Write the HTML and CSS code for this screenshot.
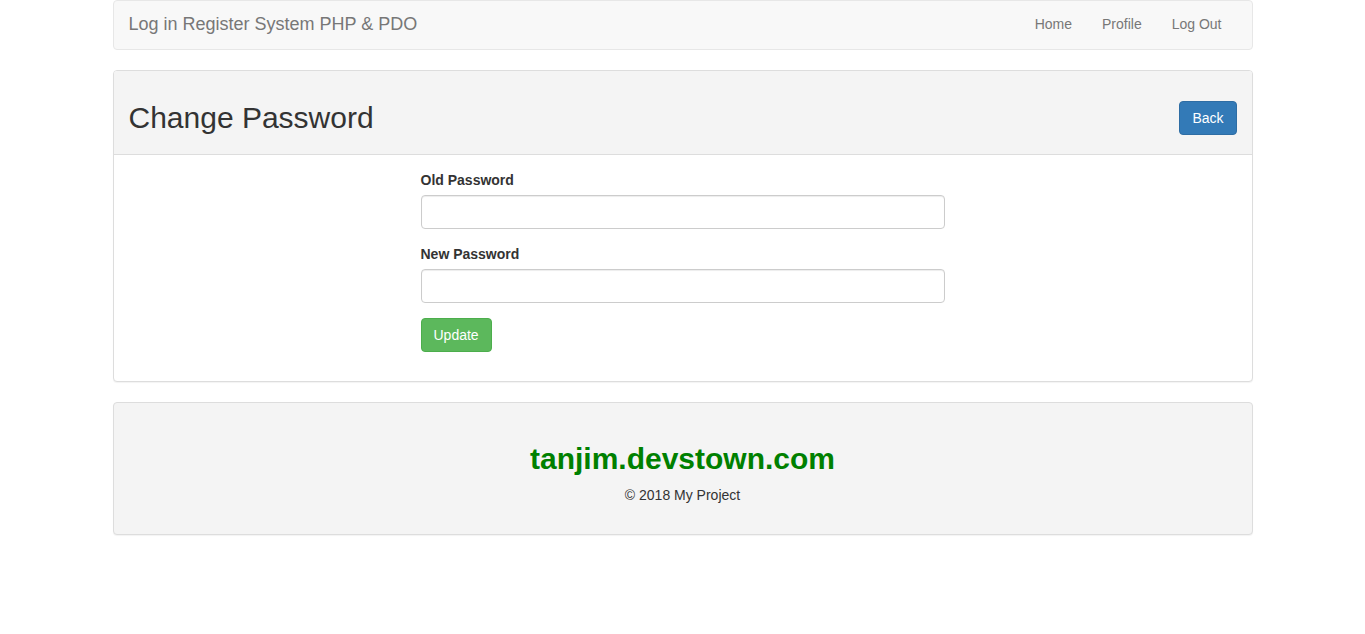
FILE: index.html
```html
<!DOCTYPE html>
<html>
<head>
<meta charset="utf-8">
<title>Change Password</title>
<link rel="stylesheet" href="styles.css">
</head>
<body>
<div class="container">
  <nav class="navbar">
    <a class="brand" href="#">Log in Register System PHP &amp; PDO</a>
    <ul class="nav">
      <li><a href="#">Home</a></li>
      <li><a href="#">Profile</a></li>
      <li><a href="#">Log Out</a></li>
    </ul>
  </nav>

  <div class="panel">
    <div class="panel-heading">
      <h2 class="title">Change Password</h2>
      <a class="btn btn-primary" href="#">Back</a>
    </div>
    <div class="panel-body">
      <form class="form">
        <div class="form-group">
          <label for="old">Old Password</label>
          <input id="old" type="password" class="form-control">
        </div>
        <div class="form-group">
          <label for="new">New Password</label>
          <input id="new" type="password" class="form-control">
        </div>
        <div class="form-group">
          <button type="button" class="btn btn-success">Update</button>
        </div>
      </form>
    </div>
  </div>

  <div class="panel footer">
    <h2 class="site">tanjim.devstown.com</h2>
    <p class="copy">&copy; 2018 My Project</p>
  </div>
</div>
</body>
</html>
```

FILE: styles.css
```css
* { box-sizing: border-box; }
html, body { margin: 0; padding: 0; }
body {
  font-family: "Liberation Sans", Arial, Helvetica, sans-serif;
  font-size: 14px;
  line-height: 20px;
  color: #333;
  background: #fff;
}
.container {
  width: 1140px;
  margin: 0 auto;
}
.navbar {
  display: flex;
  align-items: center;
  justify-content: space-between;
  height: 50px;
  background: #f8f8f8;
  border: 1px solid #e7e7e7;
  border-radius: 4px;
  margin-bottom: 20px;
}
.brand {
  font-size: 18px;
  line-height: 20px;
  padding: 13px 15px 15px;
  color: #777;
  text-decoration: none;
}
.nav {
  display: flex;
  list-style: none;
  margin: 0 15px 0 0;
  padding: 0;
}
.nav a {
  display: block;
  padding: 13px 15px 15px;
  color: #777;
  text-decoration: none;
}
.panel {
  border: 1px solid #ddd;
  border-radius: 4px;
  margin-bottom: 20px;
  box-shadow: 0 1px 1px rgba(0,0,0,.05);
  background: #fff;
}
.panel-heading {
  display: flex;
  justify-content: space-between;
  align-items: flex-start;
  padding: 10px 15px;
  background: #f4f4f4;
  border-bottom: 1px solid #ddd;
  border-radius: 3px 3px 0 0;
}
.title {
  font-size: 30px;
  font-weight: 500;
  line-height: 33px;
  margin: 20px 0 10px;
  color: #333;
}
.btn {
  display: inline-block;
  padding: 6px 12px;
  font-family: inherit;
  font-size: 14px;
  line-height: 20px;
  border: 1px solid transparent;
  border-radius: 4px;
  color: #fff;
  text-decoration: none;
  cursor: pointer;
}
.panel-heading .btn { margin-top: 20px; }
.btn-primary { background: #337ab7; border-color: #2e6da4; }
.btn-success { background: #5cb85c; border-color: #4cae4c; }
.panel-body {
  padding: 15px;
}
.form {
  width: 50%;
  margin-left: 25%;
  padding: 0 15px;
}
.form-group { margin-bottom: 15px; }
.form-group:last-child { margin-bottom: 14px; }
label {
  display: block;
  font-weight: 700;
  margin-bottom: 5px;
}
.form-control {
  display: block;
  width: 100%;
  height: 34px;
  padding: 6px 12px;
  font-size: 14px;
  border: 1px solid #ccc;
  border-radius: 4px;
  box-shadow: inset 0 1px 1px rgba(0,0,0,.075);
  background: #fff;
}
.footer {
  background: #f4f4f4;
  text-align: center;
  padding: 15px;
}
.site {
  font-size: 30px;
  font-weight: 700;
  line-height: 33px;
  color: #008000;
  margin: 24px 0 10px;
}
.copy {
  margin: 0 0 14px;
}
```
